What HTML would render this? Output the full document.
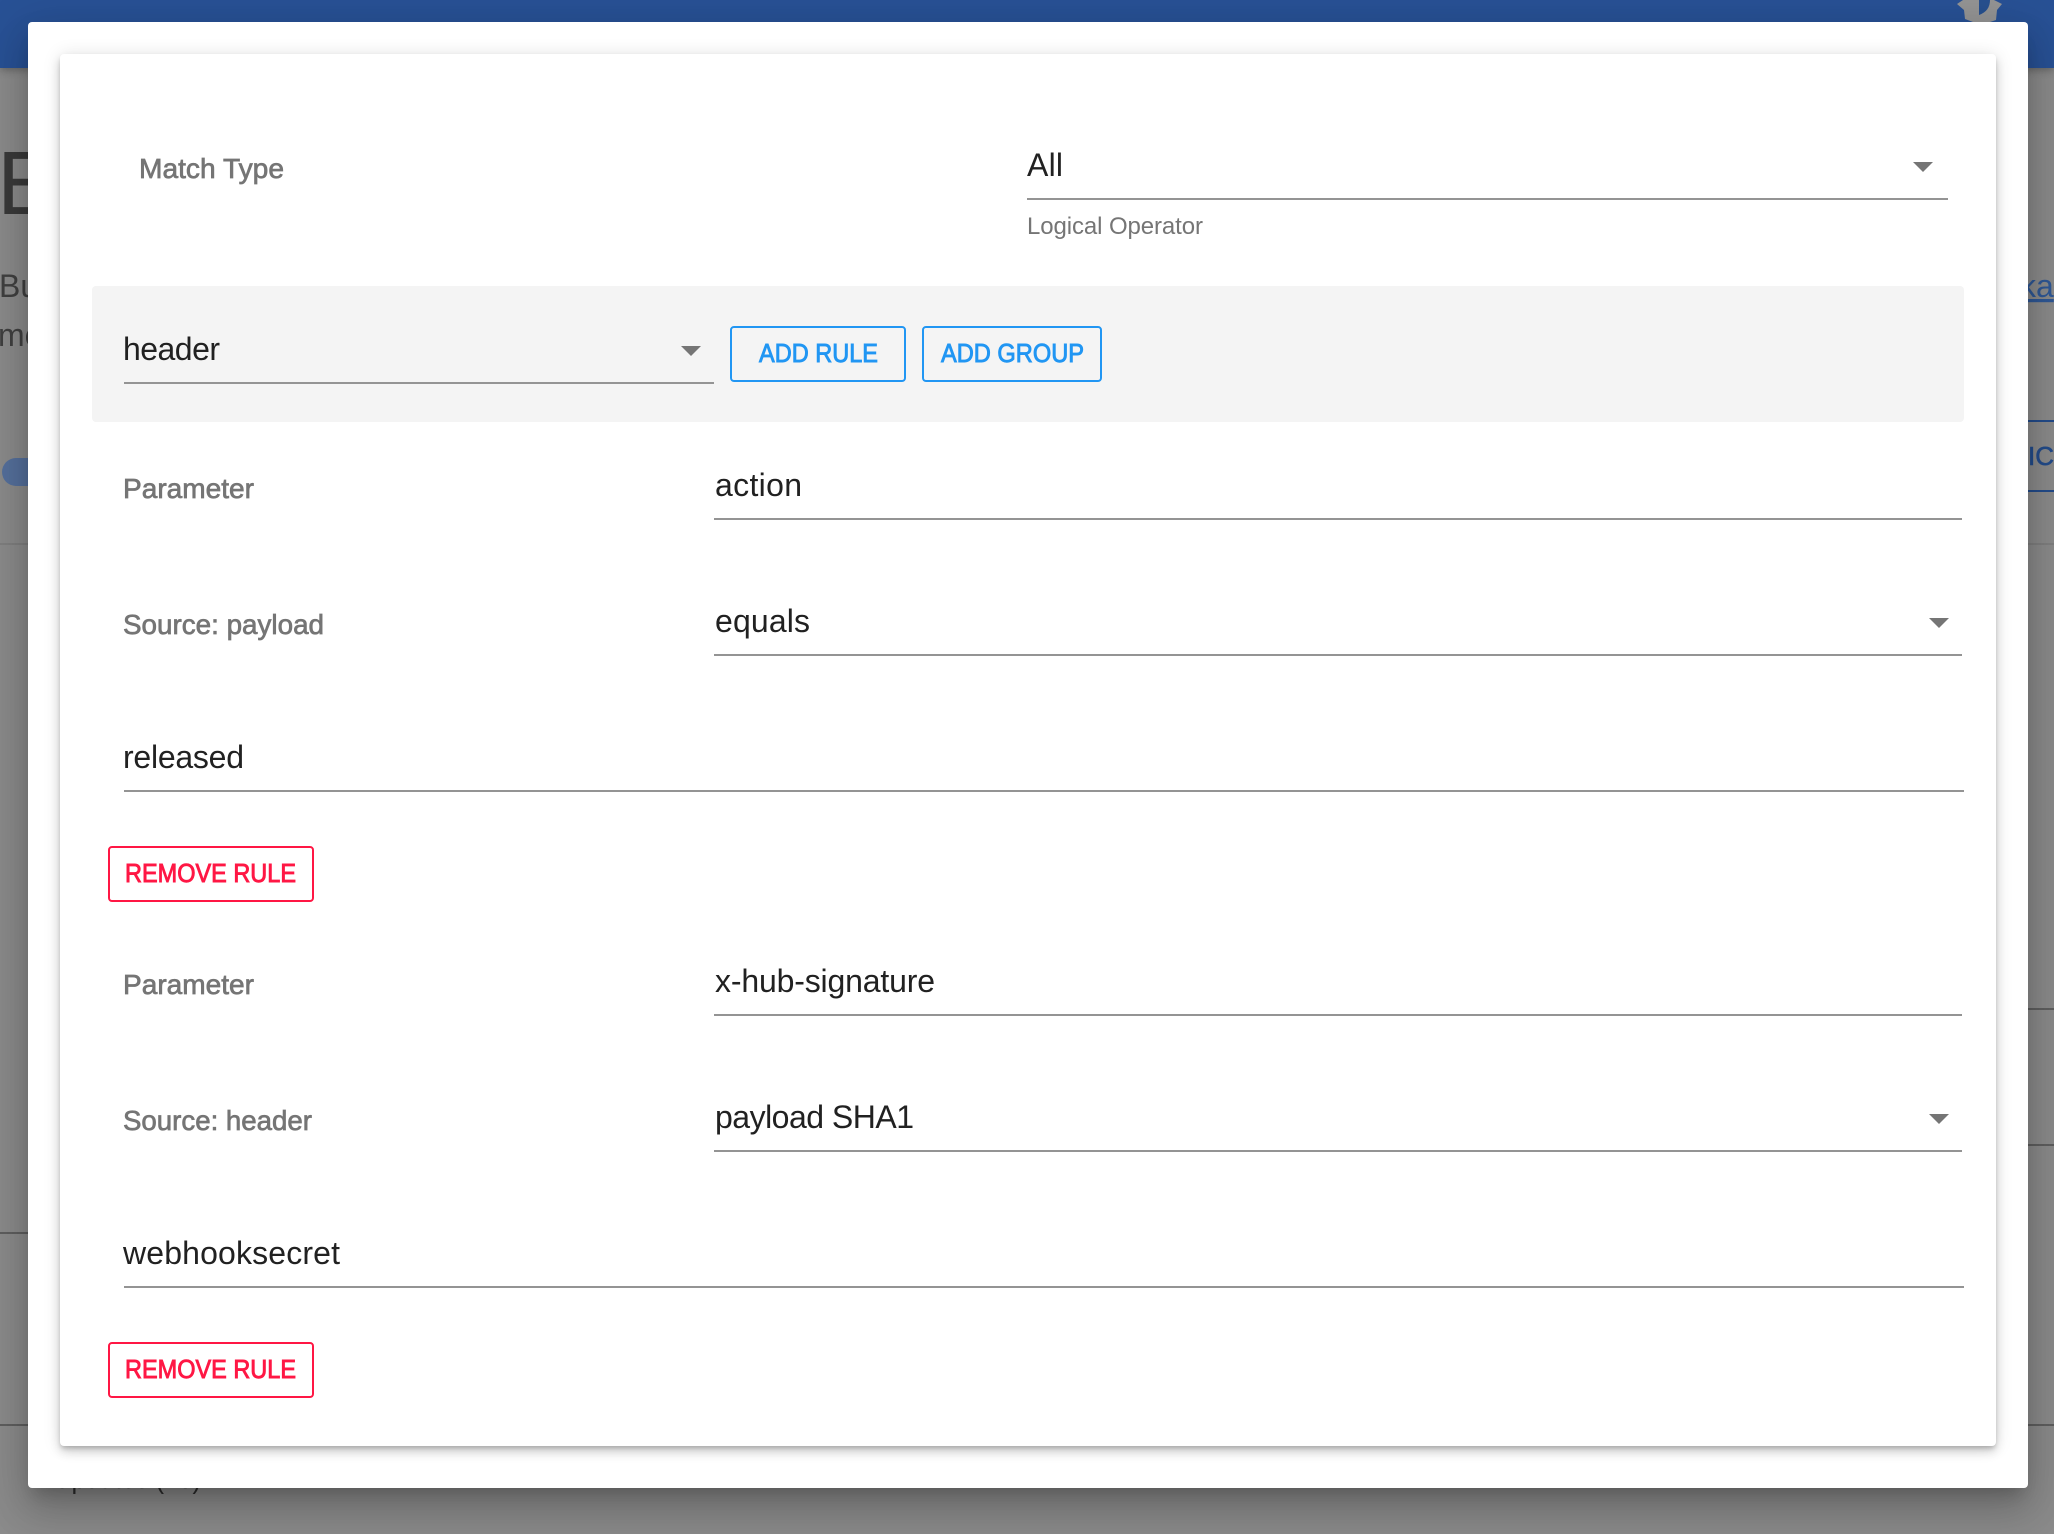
<!DOCTYPE html>
<html lang="en">
<head>
<meta charset="utf-8">
<title>Match rules</title>
<style>
html,body{margin:0;padding:0;width:2054px;height:1534px;overflow:hidden;background:#8b8b8b;font-family:"Liberation Sans",sans-serif}
.a{position:absolute}
#topbar{left:0;top:0;width:2054px;height:68px;background:#285195;box-shadow:0 2px 8px rgba(0,0,0,.3)}
#dialog{left:28px;top:22px;width:2000px;height:1466px;background:#fff;border-radius:4px;box-shadow:0 11px 15px -7px rgba(0,0,0,.2),0 24px 38px 3px rgba(0,0,0,.14),0 9px 46px 8px rgba(0,0,0,.12)}
#card{left:60px;top:54px;width:1936px;height:1392px;background:#fff;border-radius:4px;box-shadow:0 3px 5px -1px rgba(0,0,0,.2),0 6px 10px 0 rgba(0,0,0,.14),0 1px 18px 0 rgba(0,0,0,.12)}
#group{left:92px;top:286px;width:1872px;height:136px;background:#f4f4f4;border-radius:4px}
.u{height:2px;background:#949494}
.btn{box-sizing:border-box;height:56px;border:2px solid #2196f3;border-radius:4px}
.red{border-color:#ff1744}
.line{height:2px;background:#5f5f5f}
svg.t{position:absolute;left:0;top:0}
svg text{font-family:"Liberation Sans",sans-serif}
.lab{font-size:28px;fill:#757575;stroke:#757575;stroke-width:.7px}
.val{font-size:32px;fill:#212121}
.bt{font-size:26px;stroke-width:.9px}
.bl{fill:#2196f3;stroke:#2196f3}
.rd{fill:#ff1744;stroke:#ff1744}
.arr{fill:#757575}
</style>
</head>
<body>
<div class="a" id="topbar"></div>

<!-- page behind the dialog -->
<div class="a line" style="left:0;top:543px;width:28px;background:#7f7f7f"></div>
<div class="a line" style="left:0;top:1232px;width:28px"></div>
<div class="a line" style="left:0;top:1424px;width:28px"></div>
<div class="a line" style="left:2028px;top:543px;width:26px;background:#7f7f7f"></div>
<div class="a line" style="left:2028px;top:1008px;width:26px"></div>
<div class="a line" style="left:2028px;top:1144px;width:26px"></div>
<div class="a line" style="left:2028px;top:1424px;width:26px"></div>
<div class="a line" style="left:2028px;top:420px;width:26px;background:#234c8b"></div>
<div class="a line" style="left:2028px;top:490px;width:26px;background:#234c8b"></div>
<div class="a" style="left:2px;top:458px;width:60px;height:28px;border-radius:14px;background:#55709c"></div>
<svg class="t" width="2054" height="1534" viewBox="0 0 2054 1534">
  <text x="-3" y="214" font-size="90" fill="#3a3a3a">E</text>
  <text x="-1" y="297" font-size="32" fill="#404040">Bu</text>
  <text x="-2" y="346" font-size="32" fill="#404040">me</text>
  <text x="53" y="1488" font-size="28" fill="#2c2c2c" textLength="148" lengthAdjust="spacingAndGlyphs">Updates (10)</text>
  <text x="2020" y="297" font-size="32" fill="#2f5896" text-decoration="underline">ka</text>
  <text x="2028" y="465" font-size="26" fill="#234c8b" stroke="#234c8b" stroke-width=".6">IC</text>
  <polygon points="1963,0 1957,4 1964,10 1965,19 1973,22 1990,22 1996,20 1997,10 2002,4 1994,0" fill="#949494"/>
  <path d="M1979 0H1990Q1990 11 1979 15Z" fill="#27508f"/>
</svg>

<div class="a" id="dialog"></div>
<div class="a" id="card"></div>
<div class="a" id="group"></div>

<div class="a u" style="left:1027px;top:198px;width:921px"></div>
<div class="a u" style="left:124px;top:382px;width:590px"></div>
<div class="a btn" style="left:730px;top:326px;width:176px"></div>
<div class="a btn" style="left:922px;top:326px;width:180px"></div>

<div class="a u" style="left:714px;top:518px;width:1248px"></div>
<div class="a u" style="left:714px;top:654px;width:1248px"></div>
<div class="a u" style="left:124px;top:790px;width:1840px"></div>
<div class="a btn red" style="left:108px;top:846px;width:206px"></div>

<div class="a u" style="left:714px;top:1014px;width:1248px"></div>
<div class="a u" style="left:714px;top:1150px;width:1248px"></div>
<div class="a u" style="left:124px;top:1286px;width:1840px"></div>
<div class="a btn red" style="left:108px;top:1342px;width:206px"></div>

<svg class="t" width="2054" height="1534" viewBox="0 0 2054 1534">
  <text class="lab" x="139" y="178" textLength="145" lengthAdjust="spacingAndGlyphs">Match Type</text>
  <text class="val" x="1027" y="176" textLength="36">All</text>
  <polygon class="arr" points="1913,162 1933,162 1923,172"/>
  <text x="1027" y="234" font-size="24" fill="#757575" textLength="176">Logical Operator</text>

  <text class="val" x="123" y="360" textLength="97">header</text>
  <polygon class="arr" points="681,346 701,346 691,356"/>
  <text class="bt bl" x="759" y="362" textLength="119" lengthAdjust="spacingAndGlyphs">ADD RULE</text>
  <text class="bt bl" x="941" y="362" textLength="143" lengthAdjust="spacingAndGlyphs">ADD GROUP</text>

  <text class="lab" x="123" y="498" textLength="131" lengthAdjust="spacingAndGlyphs">Parameter</text>
  <text class="val" x="715" y="496" textLength="87">action</text>
  <text class="lab" x="123" y="634" textLength="201" lengthAdjust="spacingAndGlyphs">Source: payload</text>
  <text class="val" x="715" y="632" textLength="95">equals</text>
  <polygon class="arr" points="1929,618 1949,618 1939,628"/>
  <text class="val" x="123" y="768" textLength="121">released</text>
  <text class="bt rd" x="125" y="882" textLength="171" lengthAdjust="spacingAndGlyphs">REMOVE RULE</text>

  <text class="lab" x="123" y="994" textLength="131" lengthAdjust="spacingAndGlyphs">Parameter</text>
  <text class="val" x="715" y="992" textLength="220">x-hub-signature</text>
  <text class="lab" x="123" y="1130" textLength="189" lengthAdjust="spacingAndGlyphs">Source: header</text>
  <text class="val" x="715" y="1128" textLength="199">payload SHA1</text>
  <polygon class="arr" points="1929,1114 1949,1114 1939,1124"/>
  <text class="val" x="123" y="1264" textLength="217">webhooksecret</text>
  <text class="bt rd" x="125" y="1378" textLength="171" lengthAdjust="spacingAndGlyphs">REMOVE RULE</text>
</svg>
</body>
</html>
